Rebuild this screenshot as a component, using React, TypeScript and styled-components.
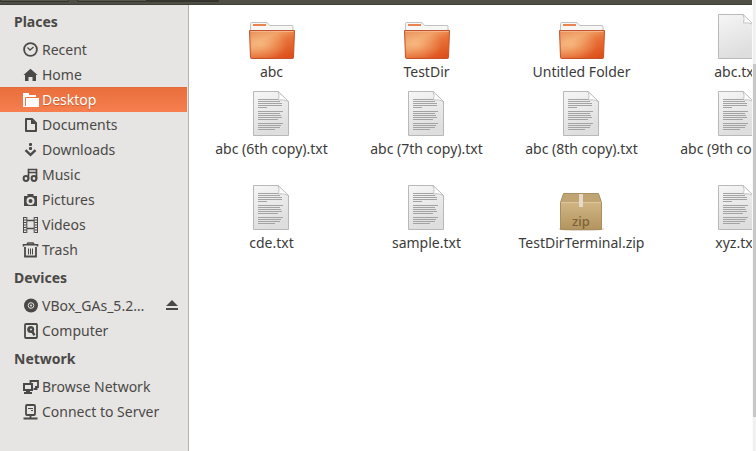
import React from "react";
import styled, { createGlobalStyle, css } from "styled-components";

const Global = createGlobalStyle`
  * { box-sizing: border-box; }
  html, body { margin: 0; height: 100%; overflow: hidden; background: #fff; }
  #root { height: 100%; }
  body { font-family: "Noto Sans", "Open Sans", sans-serif; font-size: 14px; color: #4a4947; }
  h2, ul { margin: 0; padding: 0; }
`;

const Window = styled.div`
  height: 100%;
  display: grid;
  grid-template-columns: minmax(0, 1fr) 4px;
`;

const Main = styled.div`
  display: flex;
  flex-direction: column;
  min-width: 0;
`;

const Toolbar = styled.header`
  height: 5px;
  flex: none;
  display: flex;
  background: #504f45;
  border-bottom: 1px solid #3f3e36;
`;

const ToolButton = styled.button<{ $width: number; $pressed?: boolean }>`
  width: ${(p) => p.$width}px;
  height: 2px;
  padding: 0;
  border: 1px solid #33322b;
  border-top: 0;
  border-radius: 0 0 3px 3px;
  background: ${(p) => (p.$pressed ? "#37362f" : "#5a584d")};
  &:nth-child(2) { margin-left: 8px; border-bottom-right-radius: 0; }
`;

const Body = styled.div`
  flex: 1;
  min-height: 0;
  display: grid;
  grid-template-columns: 189px minmax(0, 1fr);
`;

const Sidebar = styled.nav`
  background: #e7e5e3;
  border-right: 1px solid #b3b1af;
  padding-top: 1px;
  overflow: hidden;
`;

const Heading = styled.h2`
  height: 31px;
  padding-left: 14px;
  font-size: 14px;
  font-weight: 700;
  line-height: 32px;
`;

const List = styled.ul`
  list-style: none;
`;

const Row = styled.li<{ $selected?: boolean }>`
  display: flex;
  height: 25px;
  padding: 0 9px 0 22px;
  ${(p) =>
    p.$selected &&
    css`
      color: #fff;
      background: linear-gradient(#e2693a 0 1px, #e96f3c 1px, #f67f50);
      margin-right: 1px;
      text-shadow: 0 1px 1px #c95a2c;
    `}
`;

const PlaceLink = styled.a`
  flex: 1;
  min-width: 0;
  display: flex;
  align-items: center;
  gap: 3px;
  color: inherit;
  text-decoration: none;
  line-height: 25px;
  svg { flex: none; }
  span { white-space: nowrap; }
`;

const EjectButton = styled.button`
  width: 14px;
  padding: 0;
  border: 0;
  background: none;
  color: inherit;
  display: flex;
  align-items: center;
`;

const Files = styled.main`
  display: grid;
  grid-template-columns: repeat(4, 155px);
  grid-template-rows: 77px 94px 77px;
  padding: 8px 0 0 5px;
  overflow: hidden;
  background: #fff;
`;

const File = styled.figure`
  margin: 0;
  display: flex;
  flex-direction: column;
  align-items: center;
  color: #3c3b39;
  white-space: nowrap;
  svg { flex: none; }
  figcaption { line-height: 24px; }
`;

const ScrollTrack = styled.div`
  display: grid;
  grid-template-rows: 64fr 353fr 34fr;
  background: #f1f1f1;
  border-left: 1px solid #fafafa;
`;

const ScrollThumb = styled.div`
  grid-row: 2;
  background: #c8c8c8;
`;

type IconName =
  | "recent" | "home" | "desktop" | "documents" | "downloads" | "music" | "pictures"
  | "videos" | "trash" | "disc" | "computer" | "network" | "server";

const line = { fill: "none", stroke: "currentColor", strokeWidth: 2 };

const glyphs: Record<IconName, React.ReactNode> = {
  recent: (
    <>
      <circle cx="8.500" cy="7.500" r="6.400" {...line} strokeWidth={1.8} />
      <path d="M5.500 5.500 8 8 11.500 5" {...line} strokeWidth={1.3} />
    </>
  ),
  home: <path d="M8.500 1.800 15.500 8H14v6h-3.500v-4h-4v4H3V8H1.500Z" fill="currentColor" />,
  desktop: (
    <>
      <path d="M1 1h6v2h7v3H4v9H1Z" fill="currentColor" />
      <path d="M4 6h13v9H4Z" fill="currentColor" />
      <path d="M3.500 14V5.500H15" fill="none" stroke="#ed7545" />
    </>
  ),
  documents: (
    <>
      <path d="M4 2h6l4 4v8H4Z" {...line} strokeLinejoin="round" />
      <path d="M9 2v5h5Z" fill="currentColor" />
    </>
  ),
  downloads: (
    <>
      <rect x="7" y="1" width="3" height="3" rx="1" fill="currentColor" />
      <rect x="7" y="5" width="3" height="3" rx="1" fill="currentColor" />
      <path d="M3.500 8.200 8.500 12.800 13.500 8.200" {...line} strokeWidth={2.4} />
    </>
  ),
  music: (
    <>
      <path d="M6.500 12V2.500h8V12M6.500 5.500h8" {...line} strokeWidth={1.7} />
      <circle cx="4" cy="11.500" r="2.400" {...line} />
      <circle cx="12" cy="11.500" r="2.400" {...line} />
    </>
  ),
  pictures: (
    <path
      fillRule="evenodd"
      fill="currentColor"
      d="M5.500 2h6v2H15v10H2V4h3.500ZM8.500 5a4 4 0 1 0 0 8 4 4 0 0 0 0-8Zm0 2a2 2 0 1 1 0 4 2 2 0 0 1 0-4Z"
    />
  ),
  videos: (
    <>
      <path d="M1.500 0v16M4.800 0v16M12.200 0v16M15.500 0v16" {...line} strokeWidth={1} />
      <path d="M5 3.500h7M5 11.500h7" {...line} strokeWidth={1.4} />
      <path d="M3.200 0v16M13.800 0v16" {...line} strokeWidth={2.4} strokeDasharray="1 1.500" />
    </>
  ),
  trash: (
    <>
      <path d="M1.500 4.500V2.800h14v1.700M5 2l1-1h5l1 1" {...line} strokeWidth={1.6} />
      <path d="M3 5v9.500h11V5" {...line} strokeWidth={1.8} />
      <path d="M6.500 6.500v6M8.500 6.500v6M10.500 6.500v6" {...line} strokeWidth={1} />
    </>
  ),
  disc: (
    <>
      <circle cx="9" cy="7.500" r="7" fill="currentColor" />
      <circle cx="9" cy="7.500" r="2.800" fill="none" stroke="#e7e5e3" />
      <circle cx="9" cy="7.500" r="1" fill="#e7e5e3" />
    </>
  ),
  computer: (
    <>
      <rect x="3" y="1" width="12" height="14" rx="1" {...line} strokeWidth={1.8} />
      <circle cx="8.700" cy="6.500" r="3.500" fill="currentColor" />
      <circle cx="9" cy="6.500" r="1" fill="#e7e5e3" />
      <path d="m8.500 8 2-1 3 4.500-2 1.500Z" fill="currentColor" />
    </>
  ),
  network: (
    <>
      <path d="M8.500 4V2H16v6h-3" {...line} strokeWidth={1.8} />
      <rect x="2" y="5" width="8" height="6" {...line} />
      <path d="M4 11h4v2h2v2H2v-2h2ZM11.500 9h4v2h-4Z" fill="currentColor" />
    </>
  ),
  server: (
    <>
      <rect x="4" y="1" width="9" height="10" rx="1" {...line} strokeWidth={1.8} />
      <path d="M6 4.500h5M9 6.500h2" {...line} strokeWidth={1} />
      <path d="M8.500 11v3M1.500 14.500h14" {...line} strokeWidth={1.8} />
    </>
  ),
};

const Icon = ({ name }: { name: IconName }) => (
  <svg width="17" height="16" viewBox="0 0 17 16" aria-hidden="true">
    {glyphs[name]}
  </svg>
);

const FolderArt = () => (
  <svg width="48" height="47" viewBox="0 0 48 47" aria-hidden="true">
    <defs>
      <linearGradient id="folderFace" x1="0" y1="0" x2="0.8" y2="1">
        <stop offset="0" stopColor="#e88a56" />
        <stop offset="0.35" stopColor="#f0a066" />
        <stop offset="0.6" stopColor="#e8733a" />
        <stop offset="1" stopColor="#de4f1c" />
      </linearGradient>
      <radialGradient id="folderGlow" cx="0.25" cy="0.5" r="0.6">
        <stop offset="0" stopColor="#f8c48c" stopOpacity="0.7" />
        <stop offset="1" stopColor="#f8c48c" stopOpacity="0" />
      </radialGradient>
    </defs>
    <path d="M2.500 20V10.500q0-1 1-1H18q1 0 2 1l1.500 2H44q1 0 1 1V20Z" fill="#f6f6f4" stroke="#bfc2be" />
    <path d="M5 11h13v2H5Z" fill="#ea8350" />
    <path d="M1.500 17.500h45l-1 27q0 1-1 1h-41q-1 0-1-1Z" fill="url(#folderFace)" stroke="#c3532a" />
    <path d="M2.500 18.500h43l-1 26h-41Z" fill="url(#folderGlow)" />
    <path d="M2.500 18.500h43" stroke="#f3b48c" />
  </svg>
);

const textLines = [
  [8, 25], [10, 22], [12, 24], [14, 24], [16, 9],
  [20, 25], [22, 22], [24, 23], [26, 24], [28, 20],
  [32, 25], [34, 23], [36, 22], [38, 17],
];

const PaperArt = ({ blank }: { blank?: boolean }) => (
  <svg width="48" height="47" viewBox="0 0 48 47" aria-hidden="true">
    <defs>
      <linearGradient id="paper" x1="0" y1="0" x2="0.3" y2="1">
        <stop offset="0" stopColor="#f6f6f6" />
        <stop offset="1" stopColor="#dedede" />
      </linearGradient>
    </defs>
    <path d="M5.500 1.500H30l10.500 10v34h-35Z" fill="url(#paper)" stroke="#b8b8b8" />
    {!blank &&
      textLines.map(([y, w]) => (
        <path key={y} d={`M10 ${y + 1.5}h${w}`} stroke="#a3a3a3" />
      ))}
    <path d="M30 1.500q2 4 .5 8.500 5-1 10 1.500Z" fill="#fff" stroke="#b9b9b9" strokeWidth="0.8" />
  </svg>
);

const ZipLabel = styled.text`
  font: 500 13px "Noto Sans", sans-serif;
  fill: #7d6238;
`;

const ZipArt = () => (
  <svg width="48" height="47" viewBox="0 0 48 47" aria-hidden="true">
    <defs>
      <linearGradient id="box" x1="0" y1="0" x2="0" y2="1">
        <stop offset="0" stopColor="#d0b583" />
        <stop offset="1" stopColor="#b3945f" />
      </linearGradient>
    </defs>
    <ellipse cx="23.500" cy="45" rx="23" ry="2" fill="#ddd8d0" />
    <path d="M5.500 9.500h35l3 9h-41Z" fill="#c0a473" stroke="#a98f62" />
    <path d="M2.500 18.500h41v27h-41Z" fill="url(#box)" stroke="#a98d5e" />
    <path d="M3 18.500h40" stroke="#dcc79e" />
    <path d="M21 10h4v13h-4Z" fill="#e5dac5" />
    <ZipLabel x="23" y="42" textAnchor="middle">zip</ZipLabel>
  </svg>
);

type Place = { icon: IconName; label: string; selected?: boolean; eject?: boolean };

const sections: { title: string; places: Place[] }[] = [
  {
    title: "Places",
    places: [
      { icon: "recent", label: "Recent" },
      { icon: "home", label: "Home" },
      { icon: "desktop", label: "Desktop", selected: true },
      { icon: "documents", label: "Documents" },
      { icon: "downloads", label: "Downloads" },
      { icon: "music", label: "Music" },
      { icon: "pictures", label: "Pictures" },
      { icon: "videos", label: "Videos" },
      { icon: "trash", label: "Trash" },
    ],
  },
  {
    title: "Devices",
    places: [
      { icon: "disc", label: "VBox_GAs_5.2…", eject: true },
      { icon: "computer", label: "Computer" },
    ],
  },
  {
    title: "Network",
    places: [
      { icon: "network", label: "Browse Network" },
      { icon: "server", label: "Connect to Server" },
    ],
  },
];

type Kind = "folder" | "text" | "blank" | "zip";

const files: { name: string; kind: Kind }[] = [
  { name: "abc", kind: "folder" },
  { name: "TestDir", kind: "folder" },
  { name: "Untitled Folder", kind: "folder" },
  { name: "abc.txt", kind: "blank" },
  { name: "abc (6th copy).txt", kind: "text" },
  { name: "abc (7th copy).txt", kind: "text" },
  { name: "abc (8th copy).txt", kind: "text" },
  { name: "abc (9th copy).txt", kind: "text" },
  { name: "cde.txt", kind: "text" },
  { name: "sample.txt", kind: "text" },
  { name: "TestDirTerminal.zip", kind: "zip" },
  { name: "xyz.txt", kind: "text" },
];

const FileArt = ({ kind }: { kind: Kind }) => {
  if (kind === "folder") return <FolderArt />;
  if (kind === "zip") return <ZipArt />;
  return <PaperArt blank={kind === "blank"} />;
};

export default function App() {
  return (
    <Window>
      <Global />
      <Main>
        <Toolbar>
          <ToolButton $width={69} aria-label="Back and forward" />
          <ToolButton $width={70} aria-label="Home folder" />
          <ToolButton $width={72} $pressed aria-label="Current folder" />
        </Toolbar>
        <Body>
          <Sidebar>
            {sections.map((section) => (
              <section key={section.title}>
                <Heading>{section.title}</Heading>
                <List>
                  {section.places.map((place) => (
                    <Row key={place.label} $selected={place.selected}>
                      <PlaceLink href="#">
                        <Icon name={place.icon} />
                        <span>{place.label}</span>
                      </PlaceLink>
                      {place.eject && (
                        <EjectButton aria-label="Eject">
                          <svg width="14" height="14" viewBox="0 0 14 14" aria-hidden="true">
                            <path d="M7 1 13 7H1ZM1 9h12v2H1Z" fill="currentColor" />
                          </svg>
                        </EjectButton>
                      )}
                    </Row>
                  ))}
                </List>
              </section>
            ))}
          </Sidebar>
          <Files>
            {files.map((file) => (
              <File key={file.name}>
                <FileArt kind={file.kind} />
                <figcaption>{file.name}</figcaption>
              </File>
            ))}
          </Files>
        </Body>
      </Main>
      <ScrollTrack>
        <ScrollThumb />
      </ScrollTrack>
    </Window>
  );
}
